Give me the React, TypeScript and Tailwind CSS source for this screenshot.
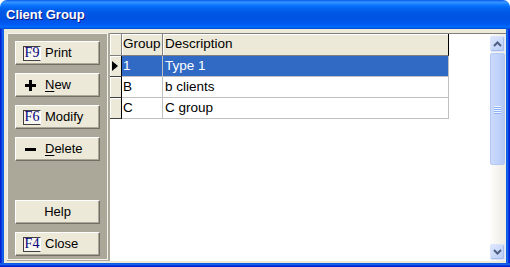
import React from "react";

const font = { fontFamily: '"Liberation Sans", Arial, sans-serif' };

function FKey({ k }: { k: string }) {
  return (
    <span
      className="flex items-center justify-center w-[18px] h-[15px] border-t border-l border-b border-t-[#404040] border-l-[#404040] border-b-[#404040] border-r border-r-white bg-[#F7F6EF] text-[#000080] text-[14px] leading-none overflow-hidden"
      style={{ fontFamily: '"Liberation Serif", "Times New Roman", serif' }}
    >
      {k}
    </span>
  );
}

function Btn({ children, center }: { children: React.ReactNode; center?: boolean }) {
  return (
    <div
      className={`h-[24px] w-[85px] flex items-center bg-[#ECE9D8] border-t border-l border-white border-b border-r border-b-[#716F64] border-r-[#716F64] shadow-[inset_-1px_-1px_0_#ACA899] text-[13px] text-black ${
        center ? "justify-center" : "pl-[7px]"
      }`}
    >
      {children}
    </div>
  );
}

function Plus() {
  return (
    <svg width="11" height="11" viewBox="0 0 11 11" className="ml-[2px] mr-[9px]">
      <rect x="4" y="0" width="3" height="11" fill="#000" />
      <rect x="0" y="4" width="11" height="3" fill="#000" />
    </svg>
  );
}

function Minus() {
  return (
    <svg width="11" height="11" viewBox="0 0 11 11" className="ml-[2px] mr-[9px]">
      <rect x="0" y="4" width="11" height="3" fill="#000" />
    </svg>
  );
}

const rows = [
  { g: "1", d: "Type 1", sel: true },
  { g: "B", d: "b clients", sel: false },
  { g: "C", d: "C group", sel: false },
];

function Chevron({ up }: { up?: boolean }) {
  return (
    <svg width="9" height="6" viewBox="0 0 9 6">
      <path
        d={up ? "M1 5 L4.5 1.5 L8 5" : "M1 1 L4.5 4.5 L8 1"}
        stroke="#4D6185"
        strokeWidth="2"
        fill="none"
      />
    </svg>
  );
}

function SBtn({ up }: { up?: boolean }) {
  return (
    <div className="h-[16px] w-[15px] rounded-[2px] border border-[#D9E3FA] bg-[linear-gradient(135deg,#DCE6FD,#BACCF6)] flex items-center justify-center shadow-[inset_-1px_-1px_0_#A9BDEB]">
      <Chevron up={up} />
    </div>
  );
}

export default function App() {
  return (
    <div className="w-[510px] h-[267px] flex flex-col bg-white" style={font}>
      {/* title bar */}
      <div className="h-[29px] rounded-t-[7px] bg-[linear-gradient(180deg,#0058EE_0%,#3A93FF_7%,#288EFF_11%,#127DFF_16%,#036FFC_22%,#0262EE_30%,#0057E5_45%,#0054E3_60%,#0055EB_75%,#005BF5_85%,#026AFE_92%,#0062EF_96%,#0043CF_100%)] flex items-center pl-[6px]">
        <span className="text-white font-bold text-[13px] [text-shadow:1px_1px_0_#0A1883]">
          Client Group
        </span>
      </div>
      <div className="flex-1 flex min-h-0">
        <div className="w-[4px] bg-[linear-gradient(90deg,#0019CF,#0831D9,#166AEE,#0855DD)]" />
        <div className="flex-1 bg-[#ECE9D8] flex pt-[4px] pl-[3px] pb-[2px] min-w-0">
          {/* left panel */}
          <div className="w-[103px] bg-[#ACA899] pr-[2px] pb-[1px]">
            <div className="h-full border border-[#F4F3EE] flex flex-col pl-[7px] pt-[7px] pb-[3px]">
              <div className="flex flex-col gap-[8px]">
                <Btn>
                  <FKey k="F9" />
                  <span className="ml-[4px]">Print</span>
                </Btn>
                <Btn>
                  <Plus />
                  <span>
                    <span className="underline underline-offset-2">N</span>ew
                  </span>
                </Btn>
                <Btn>
                  <FKey k="F6" />
                  <span className="ml-[4px]">Modify</span>
                </Btn>
                <Btn>
                  <Minus />
                  <span>
                    <span className="underline underline-offset-2">D</span>elete
                  </span>
                </Btn>
              </div>
              <div className="mt-auto flex flex-col gap-[8px]">
                <Btn center>Help</Btn>
                <Btn>
                  <FKey k="F4" />
                  <span className="ml-[4px]">Close</span>
                </Btn>
              </div>
            </div>
          </div>
          {/* grid */}
          <div className="flex-1 bg-white border-t border-[#808080] flex min-w-0">
            <div className="flex-1 text-[13.5px] text-black">
              {/* header */}
              <div className="flex h-[22px]">
                <div className="w-[12px] bg-[#ECE9D8] border-r border-b border-[#808080] shadow-[inset_1px_1px_0_#fff]" />
                <div className="w-[41px] bg-[#ECE9D8] border-r border-b border-[#808080] shadow-[inset_1px_1px_0_#fff] flex items-center pl-[1px]">
                  Group
                </div>
                <div className="w-[286px] bg-[#ECE9D8] border-r border-r-black border-b border-b-[#808080] shadow-[inset_1px_1px_0_#fff] flex items-center pl-[2px]">
                  Description
                </div>
              </div>
              {rows.map((r) => (
                <div key={r.g} className="flex h-[21px]">
                  <div className="w-[12px] bg-[#ECE9D8] border-r border-r-black border-b border-b-[#404040] shadow-[inset_1px_1px_0_#fff] flex items-center pl-[2px]">
                    {r.sel && (
                      <svg width="6" height="10" viewBox="0 0 6 10">
                        <polygon points="0,0 6,5 0,10" fill="#000" />
                      </svg>
                    )}
                  </div>
                  <div
                    className={`w-[41px] border-r border-b border-[#C0C0C0] flex items-center pl-[1px] ${
                      r.sel ? "bg-[#316AC5] text-white" : ""
                    }`}
                  >
                    {r.g}
                  </div>
                  <div
                    className={`w-[286px] border-r border-b border-[#C0C0C0] flex items-center pl-[2px] ${
                      r.sel ? "bg-[#316AC5] text-white" : ""
                    }`}
                  >
                    {r.d}
                  </div>
                </div>
              ))}
            </div>
            {/* scrollbar */}
            <div className="w-[16px] pt-[2px] pb-[1px] flex flex-col bg-[linear-gradient(90deg,#FDFDFB,#F3F1EC_60%,#EEEDE5)]">
              <SBtn up />
              <div className="h-[112px] w-[15px] mt-[1px] rounded-[2px] border border-[#B5C8F3] bg-[linear-gradient(90deg,#CAD9FC,#C1D3FB_50%,#B3C8F5)] flex flex-col items-center justify-center gap-[1px]">
                {[0, 1, 2, 3].map((i) => (
                  <div key={i} className="w-[7px] h-[1px] bg-[#EEF3FE] shadow-[0_1px_0_#8CB0F8]" />
                ))}
              </div>
              <div className="flex-1" />
              <SBtn />
            </div>
          </div>
        </div>
        <div className="w-[4px] bg-[linear-gradient(90deg,#0855DD,#166AEE,#0831D9,#0019CF)]" />
      </div>
      <div className="h-[4px] bg-[linear-gradient(180deg,#0855DD,#166AEE,#0831D9,#0019CF)]" />
    </div>
  );
}
